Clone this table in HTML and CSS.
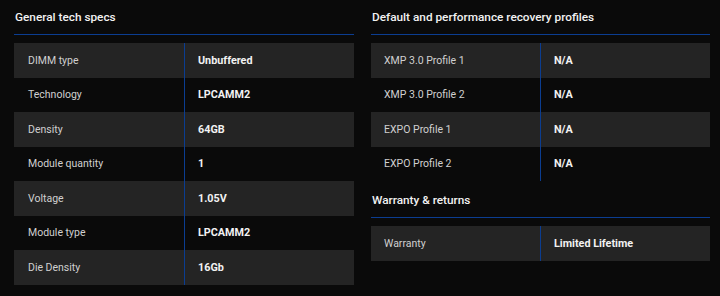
FILE: index.html
```html
<!DOCTYPE html>
<html lang="en">
<head>
    <meta charset="UTF-8">
    <meta name="viewport" content="width=device-width, initial-scale=1.0">
    <title>Tech specs</title>
    <link rel="stylesheet" href="styles.css">
</head>
<body>
    <div class="specs">
        <section class="spec-group">
            <h2 class="spec-title">General tech specs</h2>
            <div class="spec-table">
                <div class="spec-row"><span class="spec-label">DIMM type</span><span class="spec-value">Unbuffered</span></div>
                <div class="spec-row"><span class="spec-label">Technology</span><span class="spec-value">LPCAMM2</span></div>
                <div class="spec-row"><span class="spec-label">Density</span><span class="spec-value">64GB</span></div>
                <div class="spec-row"><span class="spec-label">Module quantity</span><span class="spec-value">1</span></div>
                <div class="spec-row"><span class="spec-label">Voltage</span><span class="spec-value">1.05V</span></div>
                <div class="spec-row"><span class="spec-label">Module type</span><span class="spec-value">LPCAMM2</span></div>
                <div class="spec-row"><span class="spec-label">Die Density</span><span class="spec-value">16Gb</span></div>
            </div>
        </section>

        <div class="spec-column">
            <section class="spec-group">
                <h2 class="spec-title">Default and performance recovery profiles</h2>
                <div class="spec-table">
                    <div class="spec-row"><span class="spec-label">XMP 3.0 Profile 1</span><span class="spec-value">N/A</span></div>
                    <div class="spec-row"><span class="spec-label">XMP 3.0 Profile 2</span><span class="spec-value">N/A</span></div>
                    <div class="spec-row"><span class="spec-label">EXPO Profile 1</span><span class="spec-value">N/A</span></div>
                    <div class="spec-row"><span class="spec-label">EXPO Profile 2</span><span class="spec-value">N/A</span></div>
                </div>
            </section>

            <section class="spec-group spec-group-next">
                <h2 class="spec-title">Warranty &amp; returns</h2>
                <div class="spec-table">
                    <div class="spec-row"><span class="spec-label">Warranty</span><span class="spec-value">Limited Lifetime</span></div>
                </div>
            </section>
        </div>
    </div>
</body>
</html>
```

FILE: styles.css
```css
:root {
    --page-bg: #0a0a0a;
    --row-bg: #242424;
    --accent: #0b3d91;
    --label-color: #d0d0d0;
    --value-color: #f2f2f2;
}

* {
    margin: 0;
    padding: 0;
    box-sizing: border-box;
}

body {
    font-family: Roboto, "Liberation Sans", sans-serif;
    background-color: var(--page-bg);
    color: var(--value-color);
}

.specs {
    display: grid;
    grid-template-columns: 340px 339px;
    gap: 17px;
    padding: 0 10px 0 14px;
}

.spec-column {
    display: flex;
    flex-direction: column;
}

.spec-group-next {
    margin-top: 1px;
}

.spec-title {
    font-size: 11.8px;
    font-weight: 500;
    height: 35px;
    padding: 10px 0 0 1px;
    border-bottom: 1px solid var(--accent);
    margin-bottom: 8px;
}

.spec-group-next .spec-title {
    height: 36px;
    padding-top: 11px;
}

.spec-row {
    display: grid;
    grid-template-columns: 171px 1fr;
    height: 34.5px;
    font-size: 11px;
}

.spec-column .spec-row {
    grid-template-columns: 170px 1fr;
}

.spec-row:nth-child(odd) {
    background-color: var(--row-bg);
}

.spec-label,
.spec-value {
    display: flex;
    align-items: center;
    padding-left: 14px;
}

.spec-column .spec-label {
    padding-left: 13px;
}

.spec-label {
    font-size: 10.5px;
    color: var(--label-color);
    border-right: 1px solid var(--accent);
}

.spec-value {
    font-weight: 700;
    font-size: 10.8px;
    padding-left: 13px;
}
```
